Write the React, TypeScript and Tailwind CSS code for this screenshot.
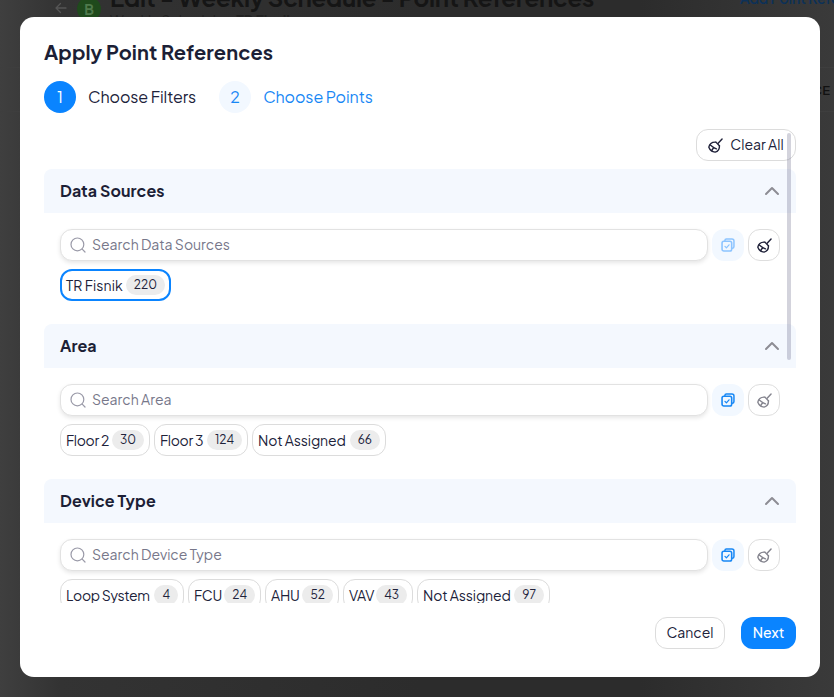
import React from "react";

const font = { fontFamily: '"Plus Jakarta Sans", Inter, "Noto Sans", sans-serif' };

function Broom({ className = "" }: { className?: string }) {
  return (
    <svg viewBox="0 0 16 16" fill="none" stroke="currentColor" strokeWidth="1.5" strokeLinecap="round" strokeLinejoin="round" className={className}>
      <path d="M15 1 10.8 5.6" />
      <path d="M8.4 4.4 12.2 8.2" />
      <path d="M8.4 4.4C5 4.2 1.6 6 .9 9.8c1 2.6 3.6 4.8 6.7 5.3 2.8-.8 4.8-3.6 4.6-6.9" />
      <path d="M2.4 7.4 6 10.2" />
      <path d="M3.8 13.6 6 10.2 9 11.6" />
    </svg>
  );
}

function SelectAll({ className = "" }: { className?: string }) {
  return (
    <svg viewBox="0 0 16 16" fill="none" stroke="currentColor" strokeLinecap="round" strokeLinejoin="round" className={className}>
      <path strokeWidth="1.7" d="M4.4 3C4.5 1.8 5.2 1.2 6.2 1.2h6.3c1.3 0 2.3 1 2.3 2.3v6.3c0 1-.6 1.7-1.6 1.8" />
      <rect x="1.2" y="3.8" width="11" height="11" rx="2" strokeWidth="1.8" />
      <path strokeWidth="1.4" d="M4.5 9.5 6.2 11.2 9.2 7.8" />
    </svg>
  );
}

function SearchIcon() {
  return (
    <svg viewBox="0 0 16 16" fill="none" stroke="#9a9aa8" strokeWidth="1.2" strokeLinecap="round" className="w-4 h-4 shrink-0">
      <circle cx="7.4" cy="7.4" r="6.4" />
      <path d="M12.2 12.2 15 15" />
    </svg>
  );
}

function Chip({ label, count, selected, width, tracking }: { label: string; count: number; selected?: boolean; width: string; tracking: string }) {
  return (
    <div className={`h-8 flex items-center justify-between rounded-xl bg-white shrink-0 ${width} ${selected ? "border-2 border-[#0a84ff] px-[4px]" : "border border-[#dcdcdc] px-[5px]"}`}>
      <span className={`text-[14px] text-[#20223a] leading-5 whitespace-nowrap pb-px ${tracking}`}>{label}</span>
      <span className="h-5 w-fit px-2 rounded-full bg-[#ececec] text-[12px] leading-5 text-center text-[#20223a]">{count}</span>
    </div>
  );
}

function Section({
  title,
  placeholder,
  children,
  activeSelect,
  activeClear,
}: {
  title: string;
  placeholder: string;
  children: React.ReactNode;
  activeSelect?: boolean;
  activeClear?: boolean;
}) {
  return (
    <section className="mb-[23px]">
      <div className="h-11 bg-[#f4f8fe] flex items-center justify-between pl-4 pr-4 rounded-t-lg">
        <span className="text-[16px] font-bold text-[#1c1f36] tracking-[0.08px]">{title}</span>
        <svg viewBox="0 0 16 10" fill="none" stroke="#8d8d94" strokeWidth="2" strokeLinecap="round" strokeLinejoin="round" className="w-4 h-[10px]">
          <path d="M2 8 8 2l6 6" />
        </svg>
      </div>
      <div className="pt-4 pl-4 pr-4">
        <div className="flex items-center gap-1">
          <div className="h-8 flex-1 flex items-center gap-[6px] pl-[9px] rounded-xl border border-[#e2e2e2] bg-white shadow-[0_2px_4px_rgba(0,0,0,0.1)]">
            <SearchIcon />
            <span className="text-[14px] text-[#77778a] leading-5 pb-[2px]">{placeholder}</span>
          </div>
          <div className="w-8 h-8 rounded-xl bg-[#f2f8ff] flex items-center justify-center">
            <SelectAll className={`w-[14px] h-[14px] ${activeSelect ? "text-[#1787f5]" : "text-[#8cc4ff]"}`} />
          </div>
          <div className="w-8 h-8 rounded-xl bg-white border border-[#dedede] flex items-center justify-center">
            <Broom className={`w-[15px] h-[15px] ${activeClear ? "text-[#20223a]" : "text-[#85858f]"}`} />
          </div>
        </div>
        <div className="flex gap-1 mt-2">{children}</div>
      </div>
    </section>
  );
}

export default function App() {
  return (
    <div style={font} className="relative w-[834px] h-[697px] overflow-hidden bg-[#333333]">
      <div className="absolute inset-0 bg-[linear-gradient(90deg,#3f3f3f_0,#333_60px,#2c2c2c_420px,#2c2c2c_640px,#3a3a3a_100%)]" />
      <svg viewBox="0 0 12 12" fill="none" stroke="#555" strokeWidth="1.3" strokeLinecap="round" strokeLinejoin="round" className="absolute left-[55px] top-[2px] w-3 h-3">
        <path d="M11 6H1M5.5 1.5 1 6l4.5 4.5" />
      </svg>
      <div className="absolute left-[77px] -top-[3px] w-6 h-6 rounded-full bg-[#1f4a1c] text-[#4f7a4c] text-[14px] font-bold flex items-center justify-center">B</div>
      <div className="absolute left-[110px] -top-[19px] text-[24px] leading-8 font-bold text-[#151515] tracking-[-0.2px] whitespace-nowrap">Edit - Weekly Schedule - Point References</div>
      <div className="absolute left-[110px] top-[10px] text-[14px] leading-5 text-[#222] whitespace-nowrap">Weekly Schedule - <b>TR Fisnik</b></div>
      <div className="absolute left-[740px] -top-[12px] text-[14px] leading-5 font-semibold text-[#0c3158] whitespace-nowrap">Add Point References</div>
      <div className="absolute left-0 right-0 top-[67px] h-px bg-[#3e3e3e]" />
      <div className="absolute left-0 right-0 top-[111px] h-px bg-[#3e3e3e]" />
      <div className="absolute right-[4px] top-[82px] text-[13px] leading-4 font-semibold text-[#111] whitespace-nowrap">NCE</div>

      <div className="absolute left-5 top-[17px] w-[800px] h-[660px] bg-white rounded-[14px] px-6 pt-6 flex flex-col">
        <h2 className="text-[20px] leading-6 font-bold text-[#1c1f36] tracking-[0.1px] -mt-px mb-px">Apply Point References</h2>
        <div className="flex items-center mt-4 h-8">
          <div className="w-8 h-8 rounded-full bg-[#0a84ff] text-white text-[16px] flex items-center justify-center">1</div>
          <span className="ml-3 text-[16px] text-[#20223a] tracking-[-0.08px]">Choose Filters</span>
          <div className="ml-[23px] w-8 h-8 rounded-full bg-[#f2f8ff] text-[#1787f5] text-[16px] flex items-center justify-center">2</div>
          <span className="ml-3 text-[16px] text-[#1787f5] tracking-[-0.1px]">Choose Points</span>
        </div>
        <div className="relative mt-4 h-[474px] overflow-hidden">
          <div className="flex justify-end mb-2">
            <div className="h-8 w-[100px] flex items-center justify-center gap-[7px] rounded-xl border border-[#dcdcdc] bg-white">
              <Broom className="w-[15px] h-[15px] text-[#20223a]" />
              <span className="text-[14px] text-[#20223a] pb-px">Clear All</span>
            </div>
          </div>
          <Section title="Data Sources" placeholder="Search Data Sources" activeClear>
            <Chip label="TR Fisnik" count={220} selected width="w-[111px]" tracking="tracking-[0.1px]" />
          </Section>
          <Section title="Area" placeholder="Search Area" activeSelect>
            <Chip label="Floor 2" count={30} width="w-[90px]" tracking="tracking-[-0.3px]" />
            <Chip label="Floor 3" count={124} width="w-[94px]" tracking="tracking-[-0.3px]" />
            <Chip label="Not Assigned" count={66} width="w-[134px]" tracking="tracking-[-0.1px]" />
          </Section>
          <Section title="Device Type" placeholder="Search Device Type" activeSelect>
            <Chip label="Loop System" count={4} width="w-[124px]" tracking="tracking-[-0.36px]" />
            <Chip label="FCU" count={24} width="w-[73px]" tracking="tracking-[-0.2px]" />
            <Chip label="AHU" count={52} width="w-[74px]" tracking="tracking-[-0.2px]" />
            <Chip label="VAV" count={43} width="w-[70px]" tracking="tracking-[-0.2px]" />
            <Chip label="Not Assigned" count={97} width="w-[133px]" tracking="tracking-[-0.1px]" />
          </Section>
          <div className="absolute right-[5px] top-1 w-[4px] h-[227px] rounded-full bg-[#23234f]/20" />
        </div>
        <div className="flex justify-end gap-4 mt-[14px]">
          <div className="h-8 w-[70px] rounded-xl border border-[#dcdcdc] bg-white flex items-center justify-center text-[14px] text-[#20223a] pb-px">Cancel</div>
          <div className="h-8 w-[55px] rounded-xl bg-[#0a84ff] flex items-center justify-center text-[14px] font-medium text-white pb-px">Next</div>
        </div>
      </div>
    </div>
  );
}
